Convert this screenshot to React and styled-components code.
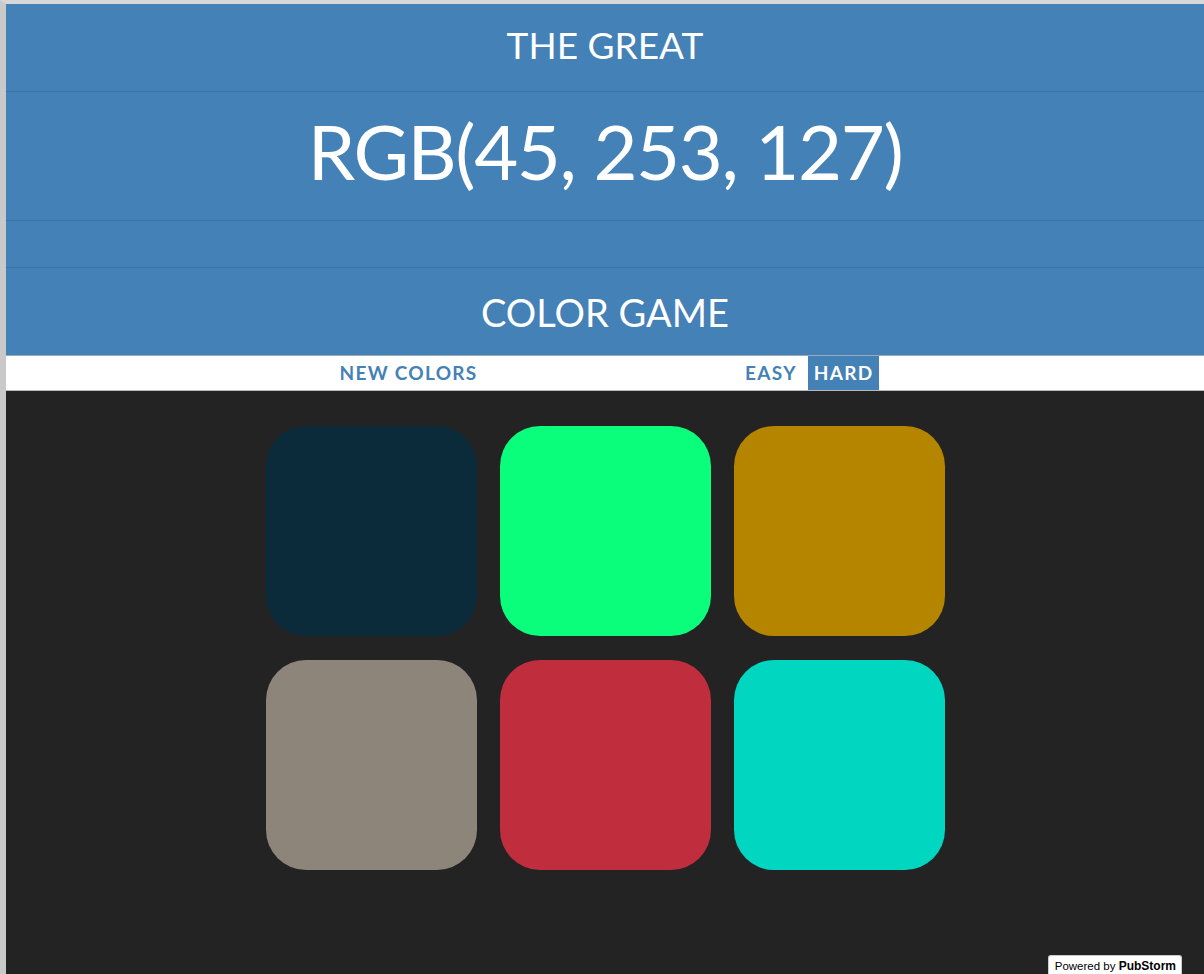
import React from "react"
import styled, { createGlobalStyle } from 'styled-components'

const Global = createGlobalStyle`
  html, body {
    margin: 0;
    padding: 0;
    background: #232323;
  }
  * { box-sizing: border-box; }
`

const Page = styled.div`
  min-height: 974px;
  border-top: 4px solid #d7d7d7;
  border-left: 6px solid #c9c9c9;
  background: #232323;
  font-family: 'Lato', 'Open Sans', sans-serif;
  display: flex;
  flex-direction: column;
  position: relative;
`

const Header = styled.header`
  background: #4481b6;
  color: #fff;
  text-align: center;
  border-bottom: 1px solid #9aa9b8;
`

const Line = styled.div`
  height: ${x => x.h}px;
  display: flex;
  align-items: center;
  justify-content: center;
  font-size: ${x => x.size}px;
  padding-bottom: ${x => x.pb || 0}px;
  font-weight: 400;
  letter-spacing: ${x => x.ls || 0}px;
  text-transform: uppercase;
  border-bottom: ${x => x.last ? 'none' : '1px solid #3c73a3'};
`

const Stripe = styled.nav`
  background: #fff;
  height: 35px;
  border-bottom: 1px solid #b9b9b9;
  display: flex;
  justify-content: center;
`

const StripeInner = styled.div`
  width: 681px;
  display: flex;
  justify-content: space-between;
  align-items: stretch;
  padding: 0 68px 0 66px;
  margin-left: 2px;
`

const Group = styled.div`
  display: flex;
  align-items: stretch;
  gap: 5px;
`

const Button = styled.button`
  border: none;
  background: ${x => x.selected ? '#4481b6' : 'transparent'};
  color: ${x => x.selected ? '#fff' : '#4481b6'};
  font-family: 'Lato', 'Open Sans', sans-serif;
  font-weight: 700;
  font-size: 19px;
  letter-spacing: 1.3px;
  text-transform: uppercase;
  padding: ${x => x.selected ? '0 5px 2px 6px' : '0 6px 2px 8px'};
  height: 100%;
  cursor: pointer;
  outline: none;
`

const Board = styled.main`
  flex: 1;
  display: flex;
  justify-content: center;
  padding-top: 35px;
  padding-left: 1px;
`

const Grid = styled.div`
  display: grid;
  grid-template-columns: repeat(3, 211px);
  grid-auto-rows: 210px;
  gap: 24px 23px;
`

const Square = styled.div`
  background: ${x => x.color};
  border-radius: 40px;
`

const Badge = styled.a`
  position: absolute;
  right: 22px;
  bottom: 0;
  background: #fff;
  color: #000;
  font-family: 'Liberation Sans', Arial, sans-serif;
  font-size: 11.5px;
  padding: 3px 5px 1px 6px;
  border-radius: 3px 3px 0 0;
  border: 1px solid #ccc;
  border-bottom: none;
  text-decoration: none;
  b { font-weight: 700; font-size: 12px; }
`

const colors = [
  'rgb(11, 43, 59)',
  'rgb(11, 254, 123)',
  'rgb(181, 133, 0)',
  'rgb(142, 133, 122)',
  'rgb(192, 46, 61)',
  'rgb(0, 214, 192)',
]

export default function App() {
  return (
    <Page>
      <Global />
      <Header>
        <Line h={88} size={37} pb={6}>The Great</Line>
        <Line h={129} size={76} pb={12} ls={-1.4}>RGB(45, 253, 127)</Line>
        <Line h={47} size={36}></Line>
        <Line h={87} size={38} last>Color Game</Line>
      </Header>
      <Stripe>
        <StripeInner>
          <Group>
            <Button>New Colors</Button>
          </Group>
          <Group>
            <Button>Easy</Button>
            <Button selected>Hard</Button>
          </Group>
        </StripeInner>
      </Stripe>
      <Board>
        <Grid>
          {colors.map(c => <Square key={c} color={c} />)}
        </Grid>
      </Board>
      <Badge href="#">Powered by <b>PubStorm</b></Badge>
    </Page>
  )
}
